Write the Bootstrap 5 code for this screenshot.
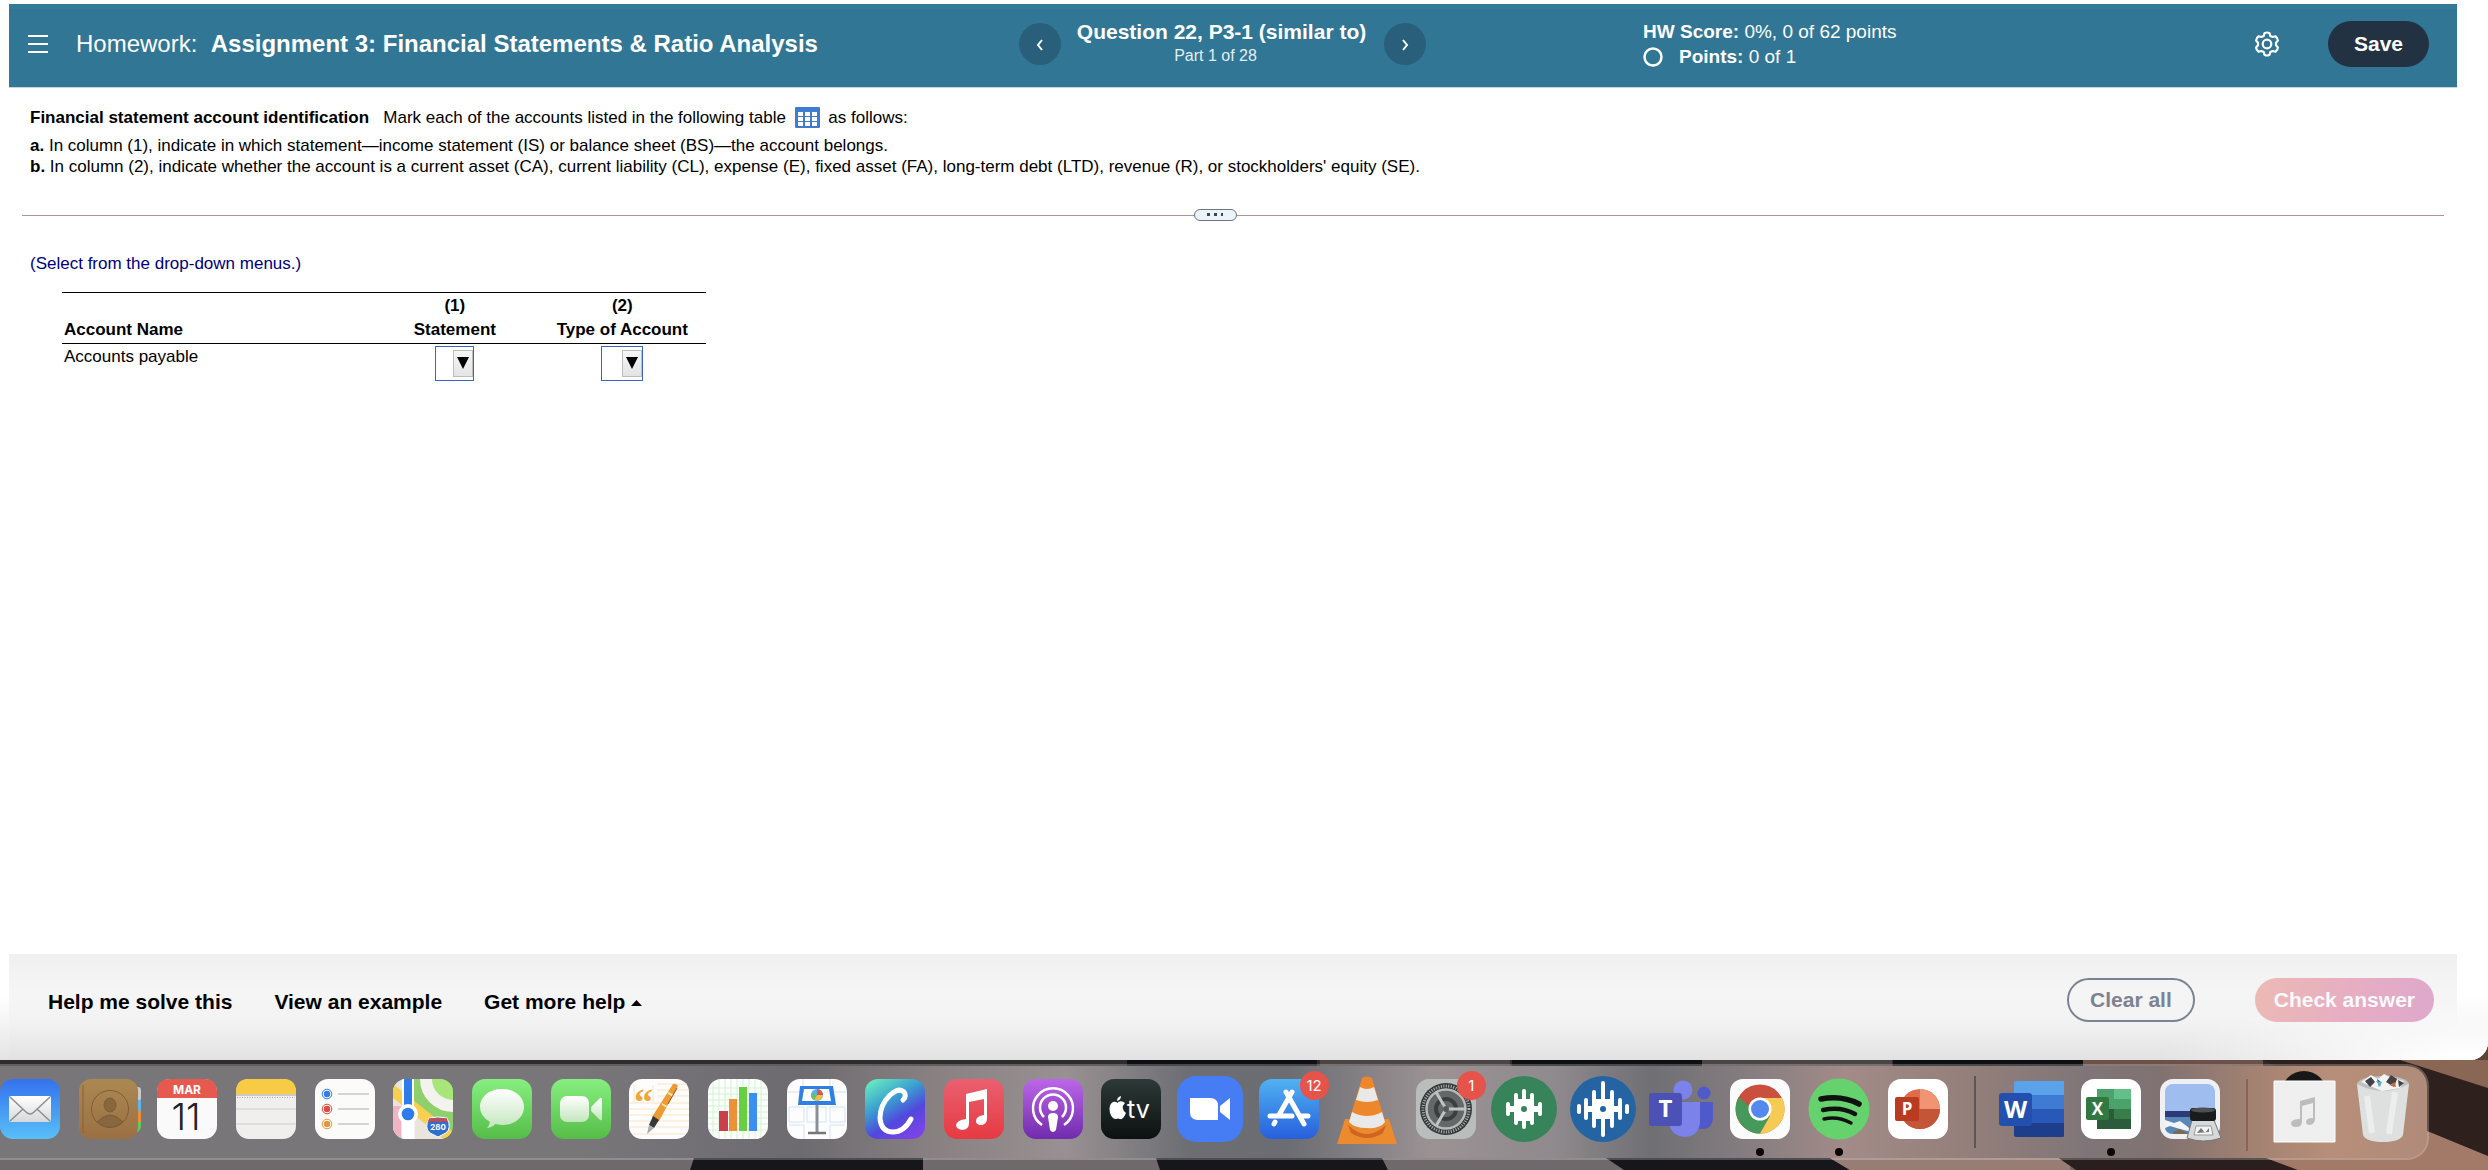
<!DOCTYPE html>
<html lang="en">
<head>
<meta charset="utf-8">
<meta name="viewport" content="width=device-width, initial-scale=1">
<title>Assignment 3: Financial Statements &amp; Ratio Analysis</title>
<link href="https://cdn.jsdelivr.net/npm/bootstrap@5.3.0/dist/css/bootstrap.min.css" rel="stylesheet">
<style>
  body { font-family: "Liberation Sans", Arial, sans-serif; font-size: 17px; line-height: 21px; color: #000; background: #5c4439; }
  .app-window { background: #fff; border-bottom-right-radius: 18px; }
  .app-inner { margin: 4px 31px 0 9px; }
  .hw-bar { display: grid; grid-template-columns: 41.25% 25.5% 1fr; background: #317695; border-top: 5px solid #337a9a; border-bottom: 1px solid #c3d7e2; color: #fff; height: 84px; padding-bottom: 8px; }
  .menu-btn { margin: 0 28px 0 19px; }
  .hw-title { font-size: 24px; line-height: 28px; }
  .q-title { font-size: 21px; line-height: 26px; }
  .q-part { font-size: 16px; line-height: 22px; color: #e3eef3; padding-right: 12px; }
  .q-head { padding: 0 18px 2px 16px; }
  .round-btn { width: 42px; height: 42px; background: #2a5f7b; }
  .score { font-size: 19px; line-height: 25px; }
  .pill { font-size: 21px; line-height: 24px; height: 44px; padding: 0 21px; font-weight: 700; }
  .pill-save { background: #223243; color: #fff; height: 46px; padding: 0 25px; }
  .pill-clear { border: 2px solid #7d8292; color: #7d8292; }
  .pill-check { background: linear-gradient(105deg, #edbab4, #e6adc3 55%, #dea8cc); color: #fafafa; padding: 0 19px; }
  .question { padding: 19px 21px 0; }
  .intro { margin-bottom: 7px; }
  .divider { margin: 32px 13px 0; height: 12px; }
  .divider hr { border-top: 1px solid #b0929c; opacity: 1; flex: 1 1 0; margin: 0; }
  .divider hr:last-child { flex-grow: 1.03; }
  .handle { width: 43px; height: 12px; border: 1px solid #66788a; border-radius: 6px; background: #eef3f7; }
  .answer { padding: 32px 21px 0; }
  .hint { color: #00007c; }
  .acct-table { margin: 18px 0 0 32px; width: 644px; border-top: 1px solid #000; }
  .acct-table th { padding: 1px 2px; line-height: 24px; vertical-align: bottom; white-space: pre-line; }
  .acct-table thead { border-bottom: 1px solid #000; }
  .acct-table td { padding: 2px; }
  .col-name { width: 48%; }
  .col-pick { width: 26%; }
  .pick { width: 39px; height: 35px; display: inline-block; vertical-align: top; position: relative; }
  .pick-wide { width: 42px; }
  .pick select { appearance: none; width: 100%; height: 100%; border: 1px solid #3566c8; background: #fff; border-radius: 0; display: block; font-size: 16px; }
  .pick span { position: absolute; right: 1px; top: 4px; width: 20px; height: 27px; border: 1px solid #bdbdbd; background: linear-gradient(#f6f6f6, #e4e4e4); pointer-events: none; }
  .foot-wrap { background: linear-gradient(#fff 40%, #e4e4e4); border-bottom-right-radius: 18px; overflow: hidden; }
  .foot-bar { height: 106px; padding: 24px 23px 38px 39px; background: linear-gradient(#f0f0f0, #f5f5f5 35%, #f3f3f3 62%, #e2e2e2); }
  .foot-fade { background: radial-gradient(ellipse 330px 66px at 100% 100%, #fff 12%, rgba(255,255,255,0)); }
  .help-nav { gap: 42px; padding-top: 3px; }
  .help-link { font-size: 21px; line-height: 26px; font-weight: 700; color: #000; text-decoration: none; }
  .foot-actions { gap: 60px; }
  .desk { height: 110px; padding-top: 4px; background: #6f696b; }
  .wall { position: absolute; inset: 0; width: 100%; height: 100%; }
  .dock { position: relative; height: 96px; margin-right: 59px; padding: 13px 14px 0 0; border: 2px solid rgba(255,255,255,.24); border-left: 0; border-radius: 0 22px 22px 0;
    background: linear-gradient(90deg, #79767a 0, #79767a 24%, #6d6b70 33%, #8b8283 39%, #989092 44%, #6c6e73 49%, #6b6d72 53%, #9b9294 59%, #8f8a8d 64%, #6f6f74 68%, #857d80 72%, #a28b88 76%, #947f7a 81%, #7f7578 86%, #807271 89%, #a48272 93%, #b78e79 96%, #b08b7a 100%); background-clip: padding-box; }
  .apps { list-style: none; margin: 0; padding: 0; }
  .apps li { width: 60px; height: 60px; position: relative; }
  .apps a, .apps svg { display: block; }
  .apps svg { width: 60px; height: 60px; overflow: visible; }
  .apps .running::after { content: ""; position: absolute; left: 26px; top: 69px; width: 8px; height: 8px; border-radius: 50%; background: #0c0605; }
  .apps-fixed { gap: 19px; }
  .sep { width: 2px; height: 72px; margin: -3px 26px 0; background: #5f5353; }
  .sep-warm { background: #8a6353; margin-top: 0; }
  .note-badge { position: absolute; right: -10px; top: -8px; width: 29px; height: 29px; border-radius: 50%; background: #e5534a; color: #fff; font: 15px/29px Inter, sans-serif; text-align: center; }
</style>
<script src="https://cdn.jsdelivr.net/npm/bootstrap@5.3.0/dist/js/bootstrap.bundle.min.js"></script>
</head>
<body>
<div class="min-vh-100 d-flex flex-column">
  <div class="app-window flex-grow-1 d-flex flex-column">
    <div class="app-inner">
      <header class="hw-bar">
        <div class="d-flex align-items-center">
          <button class="btn p-0 border-0 d-flex menu-btn" type="button" aria-label="Menu">
            <svg width="20" height="18" stroke="#fff" stroke-width="2"><path d="M0 1h20M0 9h20M0 17h20"/></svg>
          </button>
          <h1 class="hw-title fw-normal m-0">Homework: &nbsp;<b>Assignment 3: Financial Statements &amp; Ratio Analysis</b></h1>
        </div>
        <div class="d-flex align-items-center">
          <button class="btn p-0 border-0 rounded-circle round-btn" type="button" aria-label="Previous question"><svg width="8" height="12" fill="none" stroke="#fff" stroke-width="2"><path d="M6 1 2 6l4 5"/></svg></button>
          <div class="q-head text-center text-nowrap">
            <div class="q-title fw-bold">Question 22, P3-1 (similar to)</div>
            <div class="q-part">Part 1 of 28</div>
          </div>
          <button class="btn p-0 border-0 rounded-circle round-btn" type="button" aria-label="Next question"><svg width="8" height="12" fill="none" stroke="#fff" stroke-width="2"><path d="m2 1 4 5-4 5"/></svg></button>
        </div>
        <div class="d-flex align-items-center justify-content-between">
          <div class="score">
            <div><b>HW Score:</b> 0%, 0 of 62 points</div>
            <div class="d-flex align-items-center"><svg width="20" height="20" class="me-3"><circle cx="10" cy="10" r="8.5" fill="none" stroke="#fff" stroke-width="2.5"/></svg><span><b>Points:</b> 0 of 1</span></div>
          </div>
          <div class="d-flex align-items-center pe-4 me-1">
            <button class="btn p-0 border-0 d-flex me-5" type="button" aria-label="Settings">
              <svg width="26" height="26" viewBox="0 0 26 26" fill="none" stroke="#fff" stroke-width="2.2" stroke-linejoin="round"><path d="M10.5 2.2Q13 .8 15.500 2.200L16.300 5 18.600 6 21.400 5.300Q23.800 6.800 23.900 9.600L22 11.800V14.200L23.900 16.400Q23.800 19.200 21.400 20.700L18.600 20 16.300 21 15.500 23.800Q13 25.200 10.500 23.800L9.700 21 7.400 20 4.600 20.700Q2.200 19.200 2.100 16.400L4 14.200V11.800L2.100 9.600Q2.200 6.800 4.600 5.300L7.400 6 9.700 5Z"/><circle cx="13" cy="13" r="4.300"/></svg>
            </button>
            <button class="btn rounded-pill pill pill-save" type="button">Save</button>
          </div>
        </div>
      </header>
      <main>
        <section class="question">
          <p class="intro"><b>Financial statement account identification</b> &nbsp; Mark each of the accounts listed in the following table
            <a href="#" aria-label="Data table" class="d-inline-block mx-1 align-top"><svg width="25" height="21" viewBox="0 0 25 21" class="d-block"><rect width="25" height="21" rx="1" fill="#3f7bd0"/><path fill="#fff" d="M3 5h5v4H3zM10 5h5v4h-5zM17 5h5v4h-5zM3 10h5v4H3zM10 10h5v4h-5zM17 10h5v4h-5zM3 15h5v4H3zM10 15h5v4h-5zM17 15h5v4h-5z"/></svg></a>
            as follows:</p>
          <div><b>a.</b> In column (1), indicate in which statement—income statement (IS) or balance sheet (BS)—the account belongs.</div>
          <div><b>b.</b> In column (2), indicate whether the account is a current asset (CA), current liability (CL), expense (E), fixed asset (FA), long-term debt (LTD), revenue (R), or stockholders' equity (SE).</div>
        </section>
        <div class="divider d-flex align-items-center">
          <hr>
          <button class="btn p-0 handle d-flex align-items-center justify-content-center" type="button" aria-label="Resize panels"><svg width="16" height="4" fill="#3c4656"><path d="M0 0h3v3H0zM7 0h3v3H7zM14 0h2v3h-2z"/></svg></button>
          <hr>
        </div>
        <section class="answer">
          <div class="hint">(Select from the drop-down menus.)</div>
          <table class="acct-table">
            <colgroup><col class="col-name"><col class="col-pick"><col class="col-pick"></colgroup>
            <thead><tr><th scope="col">Account Name</th><th scope="col" class="text-center">(1)
Statement</th><th scope="col" class="text-center">(2)
Type of Account</th></tr></thead>
            <tbody><tr>
              <td class="align-top">Accounts payable</td>
              <td class="text-center"><label class="pick"><select aria-label="Statement for Accounts payable"><option></option><option>IS</option><option>BS</option></select><span><svg width="18" height="25" class="d-block"><path d="M3 6h12l-6 12z"/></svg></span></label></td>
              <td class="text-center"><label class="pick pick-wide"><select aria-label="Type of account for Accounts payable"><option></option><option>CA</option><option>CL</option><option>E</option><option>FA</option><option>LTD</option><option>R</option><option>SE</option></select><span><svg width="18" height="25" class="d-block"><path d="M3 6h12l-6 12z"/></svg></span></label></td>
            </tr></tbody>
          </table>
        </section>
      </main>
    </div>
    <div class="foot-wrap mt-auto">
      <div class="position-relative">
        <footer class="app-inner foot-bar mt-0 d-flex align-items-center justify-content-between">
          <nav class="d-flex help-nav">
            <a class="help-link" href="#">Help me solve this</a>
            <a class="help-link" href="#">View an example</a>
            <a class="help-link" href="#">Get more help <svg width="11" height="6" class="align-middle"><path d="M0 6 5.500 0 11 6z"/></svg></a>
          </nav>
          <div class="d-flex foot-actions position-relative z-1">
            <button class="btn rounded-pill pill pill-clear" type="button">Clear all</button>
            <button class="btn rounded-pill pill pill-check border-0" type="button">Check answer</button>
          </div>
        </footer>
        <div class="foot-fade position-absolute top-0 start-0 w-100 h-100 pe-none"></div>
      </div>
    </div>
  </div>

  <div class="desk position-relative">
    <svg class="wall" viewBox="0 0 2488 110" preserveAspectRatio="none" aria-hidden="true">
      <path fill="#2f2c2d" d="M0 0h2488v20H0z"/>
      <path fill="#0f1013" d="M1127 0h190v6h-190zM1512 0h190v6h-190zM1893 0h190v6h-190z"/>
      <path fill="#4b4445" d="M1320 0h190v6h-190zM1702 0h190v6h-190z"/>
      <path fill="#6b5148" d="M2083 0h180v6h-180z"/>
      <path fill="#17171b" d="M694 98h229v12H690zM1156 98h226l6 12h-228zM1606 98h224l20 12h-226z"/>
      <path fill="#987d74" d="M1830 98h240v12h-220z"/>
      <path fill="#2a1f1e" d="M2050 92h200l50 18h-224z"/>
      <path fill="#a37a68" d="M2250 92 2430 72 2488 96v14h-190z"/>
      <path fill="#2e211d" d="M2262 0h168l58 24v72L2420 68z"/>
      <path fill="#8a6654" d="M2400 0h88v28z"/>
    </svg>
    <nav class="dock d-flex" aria-label="Dock">
      <ul class="apps d-flex flex-grow-1 justify-content-between">
        <li><a href="#" aria-label="Mail"><svg viewBox="0 0 60 60"><defs><linearGradient id="gm" x2="0" y2="1"><stop stop-color="#3471ee"/><stop offset="1" stop-color="#58c0f8"/></linearGradient><linearGradient id="gw" x2="0" y2="1"><stop stop-color="#fff"/><stop offset="1" stop-color="#d8d8d8"/></linearGradient></defs><rect width="60" height="60" rx="13" fill="url(#gm)"/><rect x="9" y="17" width="42" height="26" rx="2" fill="url(#gw)"/><path d="m10 42 13-12M50 42 37 30M10 18l16 15q4 4 8 0l16-15" fill="none" stroke="#8b8f94" stroke-width="1.500"/></svg></a></li>
        <li><a href="#" aria-label="Contacts"><svg viewBox="0 0 60 60"><rect x="50" y="8" width="12" height="14" rx="3" fill="#c9c9c9"/><rect x="50" y="21" width="12" height="12" fill="#5fb4ea"/><rect x="50" y="32" width="12" height="11" fill="#ef8d33"/><path d="M50 43h12v4q0 5-6 7h-6z" fill="#60ca65"/><defs><linearGradient id="gc" x2="0" y2="1"><stop stop-color="#ab8851"/><stop offset="1" stop-color="#9b7044"/></linearGradient></defs><rect width="59" height="60" rx="12" fill="url(#gc)"/><path d="M4 6v48" stroke="#85633a"/><g stroke="#7d5d36" fill="none"><circle cx="31" cy="30" r="18.500"/><ellipse cx="31" cy="26" rx="6" ry="7" fill="#88673e"/><path d="M18 43q13-14 26 0-13 11-26 0" fill="#88673e"/></g></svg></a></li>
        <li><a href="#" aria-label="Calendar"><svg viewBox="0 0 60 60"><rect width="60" height="60" rx="13" fill="#fafafa"/><path d="M0 19v-6Q0 0 13 0h34q13 0 13 13v6z" fill="#e5594f"/><text x="30" y="15" text-anchor="middle" font-family="Inter,sans-serif" font-size="12" font-weight="700" fill="#fff">MAR</text><text x="29" y="51" text-anchor="middle" font-family="Inter,sans-serif" font-weight="300" font-size="37" fill="#222">11</text></svg></a></li>
        <li><a href="#" aria-label="Notes"><svg viewBox="0 0 60 60"><rect width="60" height="60" rx="13" fill="#f1efed"/><path d="M0 15v-2Q0 0 13 0h34q13 0 13 13v2z" fill="#f8cb45"/><path d="M0 16h60" stroke="#aaa39b"/><path d="M1 18.500h58" stroke="#aaa" stroke-dasharray="1 1.500"/><path d="M0 30h60M0 45h60" stroke="#cfcdcd"/></svg></a></li>
        <li><a href="#" aria-label="Reminders"><svg viewBox="0 0 60 60"><rect width="60" height="60" rx="13" fill="#fbfbfa"/><g fill="#fff"><circle cx="12" cy="15" r="4.800" stroke="#2f7bf0"/><circle cx="12" cy="30" r="4.800" stroke="#e04a3f"/><circle cx="12" cy="45" r="4.800" stroke="#e8953a"/></g><circle cx="12" cy="15" r="3.200" fill="#2f7bf0"/><circle cx="12" cy="30" r="3.200" fill="#e04a3f"/><circle cx="12" cy="45" r="3.200" fill="#e8953a"/><path d="M23 15h31M23 30h31M23 45h31" stroke="#c8c8c8" stroke-width="1.500"/></svg></a></li>
        <li><a href="#" aria-label="Maps"><svg viewBox="0 0 60 60"><defs><clipPath id="cm"><rect width="60" height="60" rx="13"/></clipPath></defs><g clip-path="url(#cm)"><path fill="#8fd06c" d="M0 0h60v60H0z"/><path fill="#e9e5dd" d="M0 0h20v60H0zM21 35l30 25H21z"/><path d="M0 27h9v33H0z" fill="#f0b4c4"/><path d="M-5 8 60 60" stroke="#f9cf52" stroke-width="11"/><circle cx="60" cy="0" r="27" fill="#a9e67a" stroke="#f4f2ee" stroke-width="12"/><path d="M15 36v24" stroke="#fff" stroke-width="13"/><path d="M15 0v36" stroke="#fff" stroke-width="12"/><path d="M15 0v36" stroke="#2e7ce8" stroke-width="8"/></g><circle cx="15" cy="35" r="10" fill="#fff"/><circle cx="15" cy="35" r="6.300" fill="#2e7ce8"/><path d="M36 39q9-2 18 0 5 10-1 15l-8 4-8-4q-6-5-1-15" fill="#2f6fd0" stroke="#fff"/><path d="M36 39.500h18v3H35z" fill="#db4437"/><text x="45" y="51" text-anchor="middle" font-size="8" font-weight="700" font-family="Inter,sans-serif" fill="#fff">280</text></svg></a></li>
        <li><a href="#" aria-label="Messages"><svg viewBox="0 0 60 60"><defs><linearGradient id="gg" x2="0" y2="1"><stop stop-color="#86ef80"/><stop offset="1" stop-color="#55bd47"/></linearGradient><linearGradient id="gb" x2="0" y2="1"><stop stop-color="#fff"/><stop offset="1" stop-color="#c3e6bd"/></linearGradient></defs><rect width="60" height="60" rx="13" fill="url(#gg)"/><path d="M30 10C17 10 8 18 8 28q0 9 10 15-1 4-3 6 6-1 8-4l7 1c13 0 22-8 22-18S43 10 30 10" fill="url(#gb)"/></svg></a></li>
        <li><a href="#" aria-label="FaceTime"><svg viewBox="0 0 60 60"><rect width="60" height="60" rx="13" fill="url(#gg)"/><rect x="9" y="17" width="29" height="26" rx="7" fill="url(#gb)"/><path d="M40 28l9-9q2-1 2 1v20q0 2-2 1l-9-9z" fill="url(#gb)"/></svg></a></li>
        <li><a href="#" aria-label="Pages"><svg viewBox="0 0 60 60"><rect width="60" height="60" rx="13" fill="#fdfdfd"/><path d="M28 5h30M28 11h32M28 17h32M0 24h60M0 30h60M0 36h60M0 42h60M0 48h60M4 55h52M5 6v17M24 6v17" stroke="#fbe3c3" stroke-width="1"/><text x="5" y="36" font-family="Liberation Serif,serif" font-weight="700" font-size="38" fill="#f0a63c">“</text><path d="M44 5q3-1 5 2L30 42l-7-4z" fill="#ee9b33"/><path d="M39 14l6 3M33 25l5 3" stroke="#fbe2b2" stroke-width="2"/><path d="m24 37 6 4-5 8-5-3z" fill="#35373b"/><path d="m20 46 5 3-7 6z" fill="#a8abb0"/><path d="M48 9 39 25" stroke="#8b5a1c"/></svg></a></li>
        <li><a href="#" aria-label="Numbers"><svg viewBox="0 0 60 60"><rect width="60" height="60" rx="13" fill="#fdfdfd"/><path d="M5 3v54M11 0v60M17 0v60M23 0v60M29 0v60M35 0v60M41 0v60M47 0v60M53 1v58M1 9h58M0 15h60M0 21h60M0 27h60M0 33h60M0 39h60M0 45h60M1 51h58" stroke="#d3f2cf"/><path fill="#c9404a" d="M11 32h9v20h-9z"/><path fill="#eb9138" d="M21 20h8v32h-8z"/><path fill="#68cf43" d="M31 8h8v44h-8z"/><path fill="#3a8ff0" d="M41 14h8v38h-8z"/></svg></a></li>
        <li><a href="#" aria-label="Keynote"><svg viewBox="0 0 60 60"><rect width="60" height="60" rx="13" fill="#fdfdfd"/><path d="M16 0v12M43 0v12M0 13h60M2 28h15v15H2zM20 28h19v15H20zM43 28h15v15H43zM2 46h15v14M43 60V46h15" stroke="#cfe4f8" fill="none"/><path d="M13 7h33l3 19H11z" fill="#2f80e2"/><path d="M17 10h25l2 12H15z" fill="#fff"/><circle cx="30" cy="16" r="6" fill="#58b0e8"/><path d="M30 16v-6a6 6 0 0 1 6 6z" fill="#e05548"/><path d="M30 16h6a6 6 0 0 1-9 5z" fill="#eebc48"/><path d="m30 16-3 5a6 6 0 0 1-3-6z" fill="#6ac259"/><path d="M30 26v27" stroke="#8b9098" stroke-width="3"/><path d="M21 54h18" stroke="#777" stroke-width="2.500"/></svg></a></li>
        <li><a href="#" aria-label="Canva"><svg viewBox="0 0 60 60"><defs><linearGradient id="gcv" x1=".1" x2=".7" y2="1"><stop stop-color="#68eec0"/><stop offset=".4" stop-color="#3a9ed0"/><stop offset=".7" stop-color="#5148dd"/><stop offset="1" stop-color="#7a43e8"/></linearGradient></defs><rect width="60" height="60" rx="13" fill="url(#gcv)"/><path d="M38 21q4-4 1-8-5-5-14 3-10 10-10 23 1 14 13 14 11 0 18-13" fill="none" stroke="#fff" stroke-width="5" stroke-linecap="round"/></svg></a></li>
        <li><a href="#" aria-label="Music"><svg viewBox="0 0 60 60"><defs><linearGradient id="gmu" x2="0" y2="1"><stop stop-color="#ea6070"/><stop offset="1" stop-color="#e63a42"/></linearGradient></defs><rect width="60" height="60" rx="13" fill="url(#gmu)"/><path d="M22 15l21-5v29q0 7-6 7-5 0-5-4 0-5 8-6V20l-15 3v21q0 7-7 7-6-1-6-5 1-5 10-6z" fill="#fff"/></svg></a></li>
        <li><a href="#" aria-label="Podcasts"><svg viewBox="0 0 60 60"><defs><linearGradient id="gpo" x2="0" y2="1"><stop stop-color="#bb67e8"/><stop offset="1" stop-color="#712bad"/></linearGradient></defs><rect width="60" height="60" rx="13" fill="url(#gpo)"/><g fill="none" stroke="#fff" stroke-width="2.500"><path d="M19 46a20 20 0 1 1 22 0"/><path d="M21 38a13 13 0 1 1 18 0"/></g><circle cx="30" cy="27" r="5" fill="#fff"/><path d="M25 38q0-4 5-4t5 4l-2 13q-3 4-6 0z" fill="#fff"/></svg></a></li>
        <li><a href="#" aria-label="Apple TV"><svg viewBox="0 0 60 60"><defs><linearGradient id="gtv" x2="0" y2="1"><stop stop-color="#2c3a36"/><stop offset="1" stop-color="#0d1012"/></linearGradient></defs><rect width="60" height="60" rx="13" fill="url(#gtv)"/><path d="M17 23q4-2 7 1-5 5 1 10-3 7-6 6-2-1-4 0-4 0-6-6-2-8 3-11 2-1 5 1zM16 22q0-4 4-5 0 4-4 5" fill="#fff"/><text x="26" y="39" font-family="Inter,sans-serif" font-size="25" fill="#fff">tv</text></svg></a></li>
        <li><a href="#" aria-label="Zoom"><svg viewBox="0 0 60 60"><rect x="-3" y="-3" width="66" height="66" rx="19" fill="#467df4"/><path d="M10 19h20q8 0 8 8v14H18q-8 0-8-8z" fill="#fff"/><path d="M40 27l10-8v22l-10-8z" fill="#fff"/></svg></a></li>
        <li><a href="#" aria-label="App Store"><svg viewBox="0 0 60 60"><defs><linearGradient id="gas" x2="0" y2="1"><stop stop-color="#50b2f2"/><stop offset="1" stop-color="#275fdc"/></linearGradient></defs><rect width="60" height="60" rx="13" fill="url(#gas)"/><path d="M33 13 20 36M16 43l-1 2M27 13l18 32M11 37h22M41 37h8" stroke="#fff" stroke-width="5" stroke-linecap="round"/></svg></a><span class="note-badge">12</span></li>
        <li><a href="#" aria-label="VLC"><svg viewBox="0 0 60 60"><path d="M8 40h44l8 25H0z" fill="#ec8a2e"/><path d="M11 46q19 18 38 0l-3 8q-16 10-32 0z" fill="#cf6423"/><path d="M25-1q5-3 10 0l13 43q-1 8-18 7-16 0-18-7z" fill="#ee862b"/><path d="M23 8q7 4 14 0l4 13q-11 4-22 0zM15 33q15 8 30 0l3 10q-5 7-18 6-13 0-18-6z" fill="#e9e9ea"/></svg></a></li>
        <li><a href="#" aria-label="System Preferences"><svg viewBox="0 0 60 60"><rect width="60" height="60" rx="13" fill="#b9bdbc"/><circle cx="30" cy="30" r="26" fill="#35383a"/><circle cx="30" cy="30" r="23" fill="none" stroke="#b5b8b9" stroke-width="3" stroke-dasharray="1 1.500"/><circle cx="30" cy="30" r="19.500" fill="#656867" stroke="#b7baba" stroke-width="2.500"/><circle cx="30" cy="30" r="10" fill="none" stroke="#3b3e40" stroke-width="4"/><path d="M30 30h20M30 30 20 13M30 30 20 47" stroke="#c0c3c3" stroke-width="3"/><circle cx="30" cy="30" r="3" fill="#55595a"/></svg></a><span class="note-badge">1</span></li>
        <li><a href="#" aria-label="Audio editor"><svg viewBox="0 0 60 60"><circle cx="30" cy="30" r="33" fill="#37845a"/><path d="M14 25v10M22 16v28M30 12v36M38 16v28M46 25v10" stroke="#fff" stroke-width="4" stroke-linecap="round"/><path d="M16 27h28v6H16zM20 20h20v22H20z" fill="#fff"/><circle cx="30" cy="30" r="3" fill="#37845a"/></svg></a></li>
        <li><a href="#" aria-label="Audio recorder"><svg viewBox="0 0 60 60"><circle cx="30" cy="30" r="33" fill="#2564a3"/><path d="M6 27v6M13 21v18M21 13v34M30 4v52M39 13v34M47 21v18M54 27v6" stroke="#fff" stroke-width="4" stroke-linecap="round"/><path d="M14 27h32v6H14zM22 20h16v20H22z" fill="#fff"/><circle cx="30" cy="30" r="3" fill="#2564a3"/></svg></a></li>
        <li><a href="#" aria-label="Teams"><svg viewBox="0 0 60 60"><circle cx="52" cy="14" r="6.500" fill="#5059c9"/><path d="M44 23h17v17q-1 10-11 10h-6z" fill="#5059c9"/><circle cx="31" cy="11" r="9.500" fill="#7b83eb"/><path d="M20 23h28v20q-1 14-15 15-14-1-16-14z" fill="#7b83eb"/><rect x="-3" y="14" width="33" height="33" rx="3" fill="#4c51b5"/><text x="13.500" y="38" text-anchor="middle" font-family="Open Sans,sans-serif" font-size="24" font-weight="700" fill="#fff">T</text></svg></a></li>
        <li class="running"><a href="#" aria-label="Chrome"><svg viewBox="0 0 60 60"><rect width="60" height="60" rx="13" fill="#fbfbfb"/><circle cx="30" cy="30" r="24.500" fill="#c9503f"/><path d="M8.800 18A24.500 24.500 0 0 0 30 54.500L41 35 30 30z" fill="#459a5b"/><path d="M30 54.500A24.500 24.500 0 0 0 52 19H30v11l10 7z" fill="#f6cb55"/><path d="M8.800 18 20 36l10-6V18z" fill="#c9503f"/><path d="M8.800 18 20 36l5-4z" fill="#459a5b"/><circle cx="30" cy="30" r="11.500" fill="#fff"/><circle cx="30" cy="30" r="9" fill="#5488ec"/></svg></a></li>
        <li class="running"><a href="#" aria-label="Spotify"><svg viewBox="0 0 60 60"><circle cx="30" cy="30" r="30.500" fill="#65d26d"/><g fill="none" stroke="#111" stroke-linecap="round"><path d="M12 20q21-4 38 5" stroke-width="5.500"/><path d="M14 31q18-4 32 4" stroke-width="4.500"/><path d="M15 40q14-3 27 4" stroke-width="3.500"/></g></svg></a></li>
        <li><a href="#" aria-label="PowerPoint"><svg viewBox="0 0 60 60"><rect width="60" height="60" rx="13" fill="#fff"/><circle cx="32" cy="30" r="20" fill="#e06c4a"/><path d="M32 30V10a20 20 0 0 1 20 20z" fill="#f19474"/><path d="M12 30h40a20 20 0 0 1-40 0" fill="#c45637"/><rect x="7" y="18" width="24" height="24" rx="2" fill="#b93c20"/><text x="19" y="36" text-anchor="middle" font-family="Open Sans,sans-serif" font-weight="700" font-size="17" fill="#fff">P</text></svg></a></li>
      </ul>
      <div class="sep"></div>
      <ul class="apps apps-fixed d-flex">
        <li><a href="#" aria-label="Word"><svg viewBox="0 0 60 60"><path fill="#5aa3ea" d="M14 2h47q1 0 1 1v13H12V4q0-2 2-2z"/><path fill="#3f7bd2" d="M12 16h50v14H12z"/><path fill="#2858b8" d="M12 30h50v14H12z"/><path fill="#1d3f8b" d="M12 44h50v13q0 1-1 1H14q-2 0-2-2z"/><rect x="-3" y="14" width="33" height="33" rx="3" fill="#2350ae"/><text x="13.500" y="39" text-anchor="middle" font-family="Open Sans,sans-serif" font-size="24" font-weight="700" fill="#fff">W</text></svg></a></li>
        <li class="running"><a href="#" aria-label="Excel"><svg viewBox="0 0 60 60"><rect width="60" height="60" rx="13" fill="#fff"/><path fill="#4ba36b" d="M16 10h17v20H16z"/><path fill="#63c088" d="M33 10h17v10H33z"/><path fill="#4ba36b" d="M33 20h17v10H33z"/><path fill="#2b5b3b" d="M16 30h34v20H16z"/><path fill="#397d4b" d="M33 30h17v10H33z"/><rect x="5" y="18" width="23" height="23" rx="2" fill="#317841"/><text x="16.500" y="36" text-anchor="middle" font-family="Open Sans,sans-serif" font-weight="700" font-size="17" fill="#fff">X</text></svg></a></li>
        <li><a href="#" aria-label="Preview"><svg viewBox="0 0 60 60"><rect width="60" height="60" rx="13" fill="#eef0f3"/><rect x="5" y="5" width="50" height="50" rx="8" fill="#9fbdee"/><path fill="#2c3a78" d="M5 32h50v8H5z"/><path fill="#5a86b8" d="M5 38h50v9q0 8-8 8H13q-8 0-8-8z"/><path d="m5 41 9 3 6-2 8 6 4 5-12-3-10-3-5 2z" fill="#f2f5f8"/><path d="m13 53 7-3 8 5H14z" fill="#7b6a4d"/><path d="M32 41h22l7 18q-18 6-34 0z" fill="#d5d9da" stroke="#777"/><path d="M36 47h15l2 9H34z" fill="#f3f5f5" stroke="#999"/><path d="m37 54 4-5 4 5 4-5v4z" fill="#777"/><rect x="30" y="29" width="26" height="13" rx="3" fill="#1a1b1c"/><ellipse cx="43" cy="31" rx="12" ry="2.500" fill="#4d4f50"/></svg></a></li>
      </ul>
      <div class="sep sep-warm"></div>
      <ul class="apps apps-fixed d-flex">
        <li><a href="#" aria-label="Audio file"><svg viewBox="0 0 60 60"><circle cx="30" cy="15" r="23" fill="#171718"/><path d="M0 2h61v61H0z" fill="#efefef" stroke="#fff"/><path d="M26 22l15-4v22q0 5-5 6-4 0-4-3 0-4 7-4V24l-11 3v16q0 5-6 5-5 0-5-4 1-4 9-4z" fill="#bdbdbd"/></svg></a></li>
        <li><a href="#" aria-label="Trash"><svg viewBox="0 0 60 60"><ellipse cx="30" cy="5" rx="26" ry="8" fill="#bfc0c0"/><path d="m8 3 10-7 7 4 6-5 8 4 12 3-4 7-18 3z" fill="#f3f3f3"/><path d="m12 2 6-4 4 5-5 5zM33 3l5-7 6 4-3 8zM24 0l4 3-2 5zM45 1l6 3-5 4z" fill="#424347"/><path d="m23 2 6 1-2 5z" fill="#55b5d5"/><path d="m36 6 6-3 1 5z" fill="#c66b3c"/><path d="M4 5q26 14 52 0l-6 51q-3 7-20 7t-20-7z" fill="#dedfdf"/><path d="m14 17 5 37M42 13l-6 42" stroke="#fff" stroke-width="6" opacity=".45"/></svg></a></li>
      </ul>
    </nav>
  </div>
</div>
</body>
</html>
